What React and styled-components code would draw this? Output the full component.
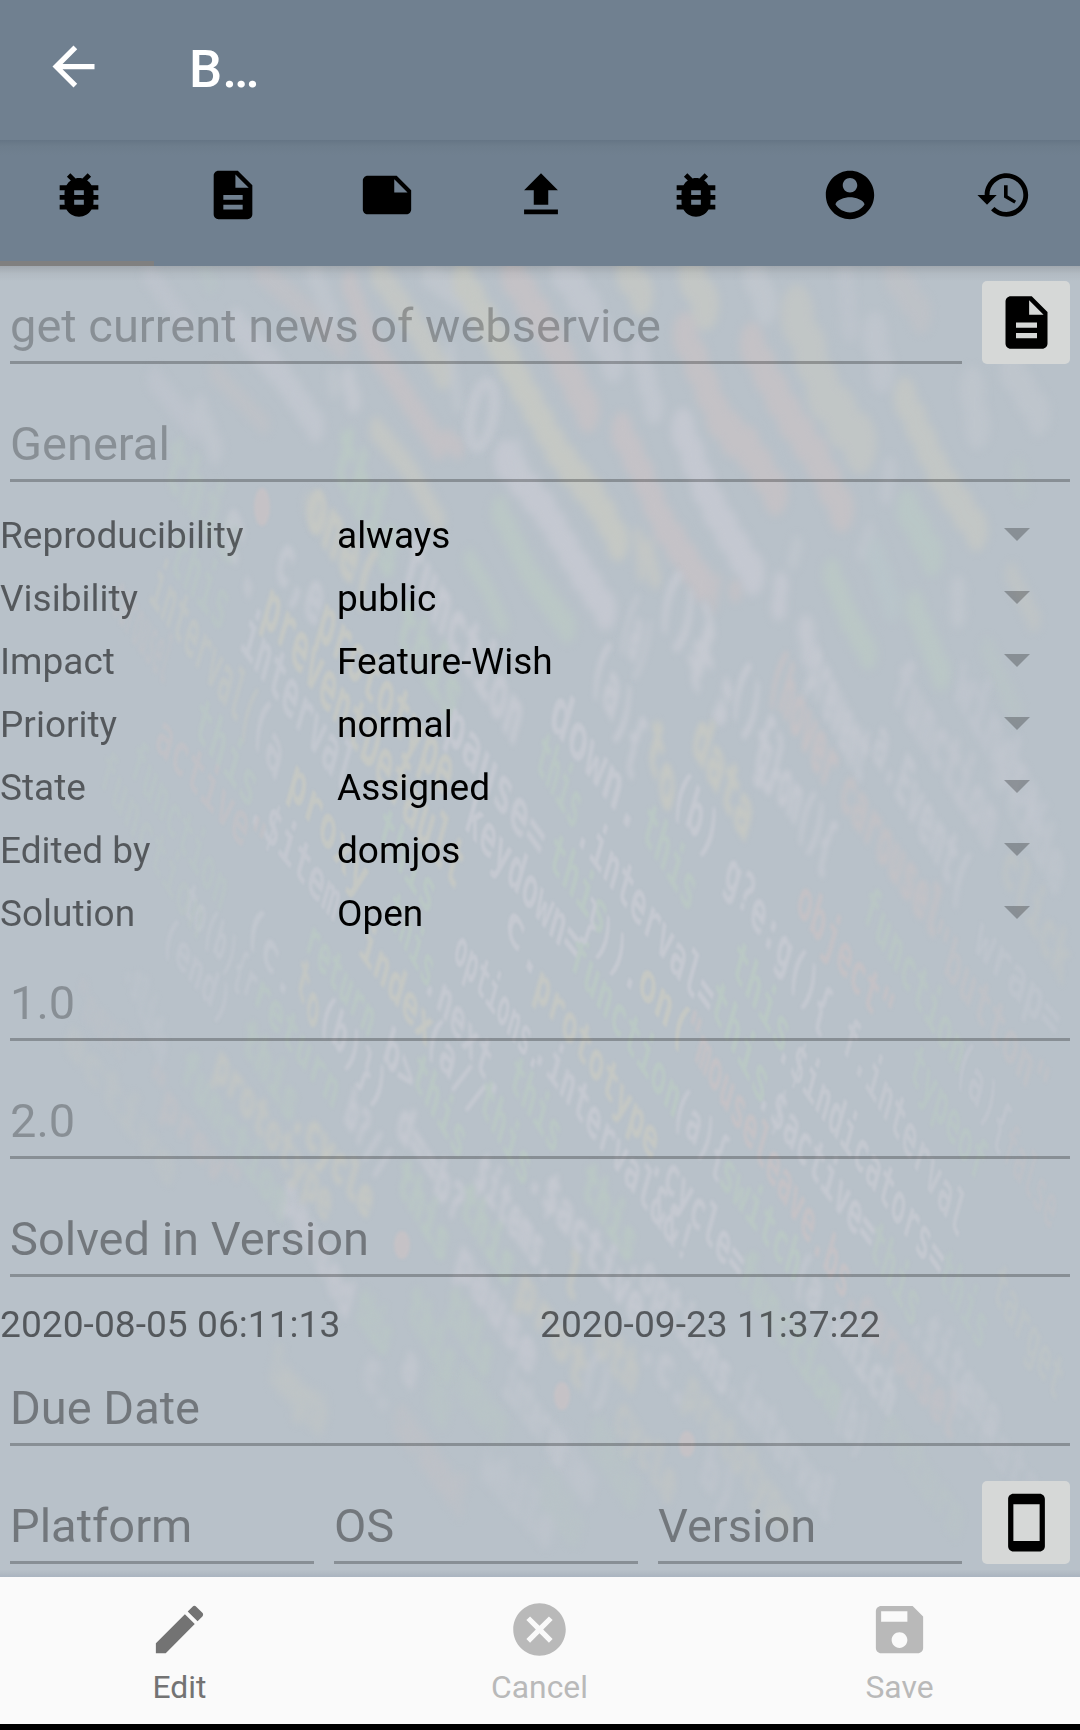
import React from "react";
import styled, { createGlobalStyle } from "styled-components";

const GlobalStyle = createGlobalStyle`
  * { box-sizing: border-box; }
  html, body { margin: 0; padding: 0; }
  body { font-family: Roboto, "Noto Sans", sans-serif; background: #000; }
`;

const Screen = styled.div`
  width: 1080px;
  height: 1730px;
  display: flex;
  flex-direction: column;
  overflow: hidden;
  background: #000;
`;

const AppBar = styled.header`
  height: 140px;
  flex: none;
  display: flex;
  align-items: center;
  padding: 0 42px 7px;
  background: #708090;
  color: #fff;
`;

const Title = styled.h1`
  margin: 0 0 0 84px;
  font-size: 52.5px;
  font-weight: 500;
  line-height: 62px;
  padding-top: 5px;
`;

const TabBar = styled.nav`
  height: 126px;
  flex: none;
  display: grid;
  grid-template-columns: repeat(7, 1fr);
  background: linear-gradient(#657585 0, #6d7d8c 6px, #708090 15px);
`;

const Tab = styled.div`
  display: flex;
  justify-content: center;
  padding: 26px 0 0 3px;
  border-bottom: 5px solid ${(p) => (p.$active ? "#808080" : "transparent")};
`;

const Icon = styled.svg`
  width: ${(p) => p.$size}px;
  height: ${(p) => p.$size}px;
  fill: currentColor;
  flex: none;
  display: block;
`;

const Page = styled.main`
  height: 1311px;
  flex: none;
  display: grid;
  background: #b8c1c9;
  overflow: hidden;
`;

const Backdrop = styled.svg`
  grid-area: 1 / 1;
  width: 1080px;
  height: 1311px;
  font-family: "DejaVu Sans Mono", monospace;
  font-weight: 700;
  user-select: none;
`;

const Form = styled.div`
  grid-area: 1 / 1;
  z-index: 1;
  display: flex;
  flex-direction: column;
  background:
    linear-gradient(rgba(70, 70, 70, 0.2), rgba(70, 70, 70, 0.06) 7px, rgba(70, 70, 70, 0) 15px) top / 100% 15px no-repeat,
    linear-gradient(rgba(80, 100, 130, 0), rgba(80, 100, 130, 0.14)) bottom / 100% 7px no-repeat;
`;

const FieldRow = styled.div`
  display: flex;
  height: ${(p) => p.$height || 118}px;
  flex: none;
  align-items: flex-end;
  padding: 0 10px 10px;
  gap: 20px;
`;

const Field = styled.div`
  flex: 1 1 0;
  min-width: 0;
  padding-bottom: 7px;
  border-bottom: 3px solid rgba(0, 0, 0, 0.26);
  font-size: 47px;
  line-height: 56px;
  white-space: nowrap;
  color: rgba(0, 0, 0, ${(p) => (p.$hint ? 0.38 : 0.26)});
`;

const IconButton = styled.button`
  width: 88px;
  height: 83px;
  flex: none;
  display: flex;
  align-items: center;
  justify-content: center;
  padding: 0;
  border: 0;
  border-radius: 5px;
  background: #d6d8d7;
  color: #000;
`;

const Selects = styled.div`
  padding-top: 11px;
  flex: none;
`;

const SelectRow = styled.div`
  height: 63px;
  display: grid;
  grid-template-columns: 337px 1fr 26px;
  align-items: center;
  padding-right: 50px;
  font-size: 37px;
  line-height: 44px;
`;

const Label = styled.span`
  color: rgba(0, 0, 0, 0.54);
  padding-top: 2px;
`;

const Value = styled.span`
  color: #000;
  padding-top: 2px;
`;

const Caret = styled.span`
  width: 26px;
  height: 13px;
  background: rgba(0, 0, 0, 0.26);
  clip-path: polygon(0 0, 100% 0, 50% 100%);
`;

const Dates = styled.div`
  height: 51px;
  flex: none;
  display: grid;
  grid-template-columns: 1fr 1fr;
  padding-top: 15px;
  font-size: 37.2px;
  line-height: 44px;
  color: rgba(0, 0, 0, 0.54);
`;

const BottomBar = styled.footer`
  height: 147px;
  flex: none;
  display: grid;
  grid-template-columns: repeat(3, 1fr);
  background: #fafafa;
`;

const Action = styled.div`
  display: flex;
  flex-direction: column;
  align-items: center;
  padding: 21px 1px 0 0;
  font-size: 31.8px;
  line-height: 38px;
  gap: 7px;
  color: ${(p) => (p.$disabled ? "#b9b9b9" : "#737373")};
`;

const paths = {
  back: "M20 11H7.83l5.59-5.59L12 4l-8 8 8 8 1.41-1.41L7.83 13H20v-2z",
  bug: "M20 8h-2.81c-.45-.78-1.07-1.45-1.82-1.96L17 4.41 15.59 3l-2.17 2.17C12.96 5.06 12.49 5 12 5c-.49 0-.96.06-1.41.17L8.41 3 7 4.41l1.62 1.63C7.88 6.55 7.26 7.22 6.81 8H4v2h2.09c-.05.33-.09.66-.09 1v1H4v2h2v1c0 .34.04.67.09 1H4v2h2.81c1.04 1.79 2.97 3 5.19 3s4.15-1.21 5.19-3H20v-2h-2.09c.05-.33.09-.66.09-1v-1h2v-2h-2v-1c0-.34-.04-.67-.09-1H20V8zm-6 8h-4v-2h4v2zm0-4h-4v-2h4v2z",
  doc: "M14 2H6c-1.1 0-1.99.9-1.99 2L4 20c0 1.1.89 2 1.99 2H18c1.1 0 2-.9 2-2V8l-6-6zm2 16H8v-2h8v2zm0-4H8v-2h8v2zm-3-5V3.5L18.5 9H13z",
  note: "M22 10l-6-6H4c-1.1 0-2 .9-2 2v12.01c0 1.1.9 1.99 2 1.99l16-.01c1.1 0 2-.89 2-1.99v-8zm-7-4.5l5.5 5.5H15V5.5z",
  upload: "M9 16h6v-6h4l-7-7-7 7h4zm-4 2h14v2H5z",
  account: "M12 2C6.48 2 2 6.48 2 12s4.48 10 10 10 10-4.48 10-10S17.52 2 12 2zm0 3c1.66 0 3 1.34 3 3s-1.34 3-3 3-3-1.34-3-3 1.34-3 3-3zm0 14.2c-2.5 0-4.71-1.28-6-3.22.03-1.99 4-3.08 6-3.08 1.99 0 5.97 1.09 6 3.08-1.29 1.94-3.5 3.22-6 3.22z",
  history: "M13 3c-4.97 0-9 4.03-9 9H1l3.89 3.89.07.14L9 12H6c0-3.87 3.13-7 7-7s7 3.13 7 7-3.13 7-7 7c-1.93 0-3.68-.79-4.94-2.06l-1.42 1.42C8.27 19.99 10.51 21 13 21c4.97 0 9-4.03 9-9s-4.03-9-9-9zm-1 5v5l4.28 2.54.72-1.21-3.5-2.08V8H12z",
  phone: "M17 1.01L7 1c-1.1 0-2 .9-2 2v18c0 1.1.9 2 2 2h10c1.1 0 2-.9 2-2V3c0-1.1-.9-1.99-2-1.99zM17 19H7V5h10v14z",
  edit: "M3 17.25V21h3.75L17.81 9.94l-3.75-3.75L3 17.25zM20.71 7.04c.39-.39.39-1.02 0-1.41l-2.34-2.34c-.39-.39-1.02-.39-1.41 0l-1.83 1.83 3.75 3.75 1.83-1.83z",
  cancel: "M12 2C6.47 2 2 6.47 2 12s4.47 10 10 10 10-4.47 10-10S17.53 2 12 2zm5 13.59L15.59 17 12 13.41 8.41 17 7 15.59 10.59 12 7 8.41 8.41 7 12 10.59 15.59 7 17 8.41 13.41 12 17 15.59z",
  save: "M17 3H5c-1.11 0-2 .9-2 2v14c0 1.1.89 2 2 2h14c1.1 0 2-.9 2-2V7l-4-4zm-5 16c-1.66 0-3-1.34-3-3s1.34-3 3-3 3 1.34 3 3-1.34 3-3 3zm3-10H5V5h10v4z",
};

function Glyph({ name, size }) {
  return (
    <Icon viewBox="0 0 24 24" $size={size} aria-hidden="true">
      <path d={paths[name]} />
    </Icon>
  );
}

const inks = { w: "#c5c9d1", g: "#bac8c5", y: "#c5c8c4", p: "#c5c2c6", b: "#b9c6ca" };

/* Out-of-focus streaks of the wallpaper: points, ink, width, strength. */
const streaks = [
  ["262,272 300,305 345,350", "p", 16, 0.5],
  ["237,325 285,380 325,440", "w", 20, 0.7],
  ["150,275 190,330", "w", 16, 0.4],
  ["205,270 214,290", "g", 12, 0.4],
  ["155,380 200,435", "w", 16, 0.4],
  ["215,372 265,425", "p", 13, 0.4],
  ["200,410 220,462", "w", 18, 0.5],
  ["315,275 335,325", "w", 18, 0.5],
  ["348,380 358,415", "w", 16, 0.8],
  ["332,375 334,392", "w", 10, 0.6],
  ["350,285 372,345 405,395 438,445", "p", 18, 0.8],
  ["448,440 465,454", "p", 14, 0.8],
  ["380,275 415,325 447,380", "y", 20, 0.8],
  ["430,275 465,300", "w", 18, 0.6],
  ["463,280 505,355 560,455 600,505 625,555", "y", 24, 0.95],
  ["450,350 458,405", "w", 10, 0.6],
  ["513,275 550,335 590,415", "p", 26, 0.85],
  ["622,432 645,480 662,522 705,588", "p", 24, 0.9],
  ["563,270 590,310 615,365", "w", 26, 0.7],
  ["505,460 545,510 580,570 615,625", "w", 24, 0.9],
  ["516,450 522,470", "w", 14, 0.7],
  ["377,430 410,470 438,520", "y", 16, 0.8],
  ["312,505 322,525", "y", 16, 0.7],
  ["500,512 530,575 573,635", "g", 19, 0.9],
  ["470,560 488,590 505,630", "g", 13, 0.9],
  ["628,272 648,305", "y", 26, 0.8],
  ["640,355 655,410", "w", 22, 0.7],
  ["692,275 712,320", "y", 30, 0.8],
  ["755,275 770,315", "w", 26, 0.6],
  ["685,335 722,425 750,450 783,505", "p", 27, 0.85],
  ["752,345 785,410 818,460 842,510", "p", 27, 0.85],
  ["797,315 825,395 865,450", "y", 36, 0.7],
  ["905,398 940,475 982,538", "y", 25, 0.75],
  ["845,275 850,325", "w", 20, 0.35],
  ["895,275 925,320", "p", 24, 0.4],
  ["875,335 885,385", "w", 28, 0.5],
  ["972,390 978,430", "w", 28, 0.45],
  ["1012,370 1045,425", "w", 26, 0.45],
  ["683,430 707,495 735,545 762,588", "w", 26, 0.9],
  ["717,580 711,612", "p", 9, 0.8],
  ["735,590 737,606", "p", 13, 0.8],
  ["890,470 885,500", "w", 16, 0.5],
  ["870,530 858,560", "w", 10, 0.5],
  ["797,545 792,565", "w", 11, 0.6],
  ["832,575 850,620 872,660", "g", 20, 0.9],
  ["908,510 932,555", "g", 25, 0.75],
  ["915,608 948,690", "g", 21, 0.8],
  ["875,555 892,605", "b", 22, 0.7],
  ["781,585 778,615", "w", 16, 0.9],
  ["806,630 810,655", "w", 18, 0.85],
  ["958,590 958,620", "w", 17, 0.6],
  ["1012,575 1040,632", "y", 15, 0.5],
  ["988,650 1015,710", "g", 15, 0.45],
  ["1018,470 1024,500", "g", 14, 0.45],
  ["648,548 658,590", "y", 12, 0.85],
  ["638,535 642,575", "y", 9, 0.85],
];

/* Code fragments of the wallpaper: text, ink, centre of the first glyph, centre of the last glyph. */
const fragments = [
  ["(){", "w", 669, 601, 700, 655],
  ["};", "w", 704, 650, 725, 700],
  ["(a)", "w", 628, 625, 643, 655],
  ["prevent", "w", 815, 670, 861, 760],
  ["a.Event(", "w", 881, 748, 960, 880],
  ["function", "w", 902, 690, 988, 826],
  ["window", "w", 965, 690, 1035, 810],
  ["slide", "w", 1000, 770, 1055, 870],
  ["click", "y", 1010, 870, 1060, 960],
  ["(hover", "p", 777, 680, 829, 769],
  ["carousel", "p", 848, 795, 933, 916],
  ["data", "y", 702, 744, 743, 816],
  ["to", "y", 655, 751, 667, 787],
  ["(b)", "w", 681, 798, 709, 837],
  ["this", "g", 650, 830, 688, 891],
  ["this", "g", 543, 759, 574, 809],
  ["this", "g", 557, 859, 599, 916],
  ["down.", "w", 561, 719, 630, 810],
  ["(a){", "w", 600, 670, 635, 745],
  ["(){}", "w", 740, 690, 775, 770],
  ["g.on(){", "w", 764, 759, 826, 848],
  [".interval=", "w", 585, 834, 705, 997],
  ["this", "g", 719, 1007, 760, 1083],
  [".$active=", "w", 766, 1097, 867, 1233],
  ["this", "g", 877, 1247, 912, 1307],
  [".$items", "w", 919, 1323, 991, 1420],
  ["this", "g", 344, 462, 389, 551],
  ["this", "g", 406, 630, 451, 698],
  ["one(", "y", 317, 512, 365, 580],
  ["this", "g", 175, 470, 230, 540],
  ["this", "g", 179, 559, 220, 609],
  ["interval(", "y", 158, 591, 248, 716],
  ["(a", "w", 261, 725, 274, 755],
  ["this", "g", 203, 726, 248, 787],
  [".$item", "w", 258, 812, 331, 901],
  ["preventDefault", "y", 272, 612, 454, 866],
  ["interval", "w", 250, 641, 344, 773],
  ["c.", "w", 234, 534, 251, 576],
  ["c,e", "w", 285, 565, 314, 602],
  ["function", "w", 413, 566, 513, 719],
  ["active\"", "p", 165, 741, 255, 844],
  ["function", "g", 138, 766, 220, 891],
  ["function", "g", 107, 776, 196, 919],
  ["carousel", "p", 118, 600, 165, 665],
  ["prototype", "y", 327, 626, 444, 773],
  ["proxy", "y", 298, 787, 358, 876],
  ["this", "g", 386, 834, 427, 894],
  ["pause=", "w", 456, 730, 535, 838],
  ["keydown=", "w", 474, 822, 572, 944],
  ["function", "g", 578, 960, 672, 1098],
  ["(a){", "w", 681, 1112, 719, 1157],
  ["switch", "g", 728, 1177, 793, 1263],
  ["(a.which", "w", 802, 1277, 888, 1397],
  ["})).", "w", 590, 925, 632, 975],
  ["on(", "y", 648, 987, 680, 1028],
  ["\"mouseleave.bs", "p", 692, 1037, 843, 1280],
  [".carousel", "p", 853, 1297, 950, 1420],
  ["object\"", "p", 805, 905, 884, 1013],
  ["g?e:g(){", "w", 733, 878, 822, 1010],
  ["f.interval", "w", 850, 1043, 957, 1217],
  ["function", "g", 871, 912, 957, 1053],
  ["(a){", "w", 964, 1067, 1001, 1127],
  ["\"button\"", "p", 939, 947, 1039, 1087],
  ["this", "g", 740, 967, 781, 1033],
  [".$indicators=", "w", 786, 1050, 936, 1260],
  ["this", "g", 946, 1275, 980, 1330],
  ["typeof", "g", 917, 1070, 977, 1163],
  ["wrap=", "w", 985, 945, 1050, 1020],
  ["c.", "w", 515, 930, 532, 958],
  ["prototype", "y", 543, 990, 650, 1140],
  [".cycle=", "w", 659, 1163, 736, 1263],
  ["function", "g", 747, 1275, 833, 1400],
  ["(b)", "w", 842, 1412, 860, 1438],
  [".interval&&!", "w", 542, 1052, 684, 1245],
  ["this", "g", 590, 1187, 628, 1243],
  [".options", "w", 636, 1263, 723, 1377],
  [".$active", "w", 537, 1180, 635, 1307],
  ["(end)", "w", 170, 940, 222, 1006],
  ["to(b){r", "w", 190, 905, 250, 985],
  ["(c.", "w", 255, 930, 285, 980],
  ["return", "g", 313, 943, 368, 1020],
  ["return", "g", 262, 997, 331, 1090],
  ["this", "g", 250, 1043, 289, 1103],
  ["index", "y", 368, 950, 424, 1027],
  ["(a//", "w", 434, 1040, 475, 1100],
  [".next.", "w", 432, 983, 496, 1080],
  ["options.", "w", 461, 953, 535, 1055],
  ["this", "g", 395, 915, 427, 970],
  ["this", "g", 517, 1080, 553, 1135],
  ["to", "y", 303, 983, 313, 1010],
  ["(b)})", "w", 327, 1018, 378, 1090],
  ["b>", "w", 392, 1055, 406, 1076],
  ["prototype", "y", 222, 1070, 324, 1203],
  ["function", "g", 189, 1073, 279, 1203],
  [".cycle", "y", 300, 1120, 365, 1200],
  ["b?//", "w", 352, 1115, 382, 1165],
  ["d==b?", "w", 405, 1128, 455, 1205],
  ["this", "g", 420, 1077, 458, 1140],
  ["this", "g", 487, 1103, 523, 1167],
  ["this", "g", 405, 1183, 441, 1243],
  ["this", "g", 468, 1207, 506, 1267],
  ["$items.", "w", 482, 1177, 547, 1265],
  [".slide", "w", 130, 970, 162, 1050],
  ["\"next\"", "p", 80, 1000, 130, 1055],
  ["active", "y", 75, 1045, 165, 1165],
  ["\"prev\"", "p", 155, 1090, 230, 1185],
  ["paused", "w", 290, 1200, 345, 1300],
  ["pause", "w", 465, 1267, 527, 1353],
  ["this", "g", 362, 1310, 385, 1340],
  ["this", "g", 415, 1310, 448, 1365],
  ["this", "g", 453, 1310, 485, 1360],
  ["this", "g", 432, 1390, 445, 1415],
  ["return", "g", 460, 1380, 500, 1430],
  ["length", "y", 275, 1370, 320, 1420],
  ["c.", "w", 372, 1375, 385, 1395],
  ["a", "w", 410, 1370, 410, 1370],
  ["interva", "w", 510, 1385, 560, 1450],
  ["prot", "y", 527, 1295, 577, 1368],
  ["l", "y", 572, 1280, 572, 1280],
  ["oth", "y", 603, 1345, 630, 1375],
  ["()", "w", 590, 1375, 602, 1393],
  [".c.", "w", 650, 1350, 680, 1390],
  ["cycle", "y", 622, 1420, 668, 1485],
  ["prototype", "y", 692, 1395, 785, 1520],
  [".interval", "w", 735, 1385, 826, 1503],
  ["this", "g", 597, 1440, 632, 1493],
  ["b)", "w", 710, 1475, 725, 1495],
  ["$items", "w", 555, 1445, 590, 1490],
  ["carousel", "p", 400, 1420, 460, 1500],
  ["while", "w", 490, 1470, 545, 1530],
  ["this", "g", 545, 1490, 575, 1530],
  ["return", "g", 890, 1430, 955, 1520],
  ["e.data", "w", 960, 1400, 1030, 1490],
  ["target", "y", 1000, 1290, 1055, 1380],
  ["false", "p", 1010, 1150, 1050, 1210],
];

const PAGE_TOP = 266;
const EM = 40;
const ADVANCE = 0.602 * EM;
const STRETCH = 1.9;

function placeStreak([points, ink, width, strength]) {
  return {
    points: points
      .split(" ")
      .map((pair) => {
        const [x, y] = pair.split(",").map(Number);
        return `${x},${((y - PAGE_TOP) / STRETCH).toFixed(1)}`;
      })
      .join(" "),
    stroke: inks[ink],
    strokeWidth: width * 0.9,
    strokeDasharray: `1 ${(width * 0.62).toFixed(1)}`,
    opacity: strength,
  };
}

function placeFragment([text, ink, x1, y1, x2, y2]) {
  const spans = text.length - 1;
  const a = spans ? (x2 - x1) / (spans * ADVANCE) : 0.52;
  const b = spans ? (y2 - y1) / (spans * ADVANCE) : 0.8;
  const rise = 42 + (x1 / 1080) * 10 + (Math.max(0, 900 - y1) / 600) * 32;
  const c = (-0.28 * rise) / EM;
  const d = rise / EM;
  const ox = -ADVANCE / 2;
  const oy = 0.27 * EM;
  const x = x1 + a * ox + c * oy;
  const y = y1 - PAGE_TOP + b * ox + d * oy;
  const mx = (x1 + x2) / 2;
  const my = (y1 + y2) / 2;
  const depth = my - (700 + 0.45 * mx);
  const blur = 0.9 + Math.abs(depth) / (depth < 0 ? 130 : 135);
  const fade =
    Math.min(1, Math.max(0.15, (mx - 20) / 320)) *
    Math.min(1, Math.max(0.3, (1180 - mx) / 340)) *
    Math.min(1, Math.max(0.35, (1700 - my) / 420));
  return {
    text,
    fill: inks[ink],
    transform: `matrix(${[a, b, c, d, x, y].map((n) => n.toFixed(3)).join(" ")})`,
    blur: Math.min(5, Math.round(blur)),
    opacity: fade.toFixed(2),
  };
}

const smears = streaks.map(placeStreak);
const placed = fragments.map(placeFragment);

function Wallpaper() {
  return (
    <Backdrop viewBox="0 0 1080 1311" aria-hidden="true">
      <defs>
        {[1, 2, 3, 4, 5].map((n) => (
          <filter
            key={n}
            id={`soft${n}`}
            x="0"
            y="0"
            width="1080"
            height="1311"
            filterUnits="userSpaceOnUse"
            colorInterpolationFilters="sRGB"
          >
            <feGaussianBlur stdDeviation={n === 1 ? 0.9 : n * 0.85} />
          </filter>
        ))}
      </defs>
      <g filter="url(#soft5)">
        <g fill="none" strokeLinecap="round" strokeLinejoin="round" transform={`scale(1 ${STRETCH})`}>
          {smears.map((smear, i) => (
            <polyline key={i} {...smear} />
          ))}
        </g>
      </g>
      <ellipse
        cx="482"
        cy="149"
        rx="11"
        ry="33"
        transform="rotate(10 482 149)"
        fill="none"
        stroke={inks.w}
        strokeWidth="11"
        opacity="0.75"
        filter="url(#soft4)"
      />
      {[5, 4, 3, 2, 1].map((n) => (
        <g key={n} filter={`url(#soft${n})`} strokeWidth={n > 2 ? n * 0.5 : 0}>
          {placed
            .filter((f) => f.blur === n)
            .map((f, i) => (
              <text key={i} fontSize={EM} fill={f.fill} stroke={f.fill} opacity={f.opacity} transform={f.transform}>
                {f.text}
              </text>
            ))}
        </g>
      ))}
      <g fill={inks.p} filter="url(#soft2)">
        <ellipse cx="262" cy="241" rx="8" ry="19" />
        <ellipse cx="402" cy="979" rx="8" ry="14" />
        <ellipse cx="562" cy="1130" rx="8" ry="14" />
        <ellipse cx="687" cy="1178" rx="8" ry="13" />
      </g>
    </Backdrop>
  );
}

const tabs = ["bug", "doc", "note", "upload", "bug", "account", "history"];

const selects = [
  ["Reproducibility", "always"],
  ["Visibility", "public"],
  ["Impact", "Feature-Wish"],
  ["Priority", "normal"],
  ["State", "Assigned"],
  ["Edited by", "domjos"],
  ["Solution", "Open"],
];

export default function App() {
  return (
    <>
      <GlobalStyle />
      <Screen>
        <AppBar>
          <Glyph name="back" size={63} />
          <Title>B…</Title>
        </AppBar>
        <TabBar>
          {tabs.map((name, i) => (
            <Tab key={i} $active={i === 0}>
              <Glyph name={name} size={58} />
            </Tab>
          ))}
        </TabBar>
        <Page>
          <Wallpaper />
          <Form>
            <FieldRow $height={108}>
              <Field>get current news of webservice</Field>
              <IconButton aria-label="Description">
                <Glyph name="doc" size={63} />
              </IconButton>
            </FieldRow>
            <FieldRow>
              <Field>General</Field>
            </FieldRow>
            <Selects>
              {selects.map(([label, value]) => (
                <SelectRow key={label}>
                  <Label>{label}</Label>
                  <Value>{value}</Value>
                  <Caret />
                </SelectRow>
              ))}
            </Selects>
            <FieldRow $height={107}>
              <Field>1.0</Field>
            </FieldRow>
            <FieldRow>
              <Field>2.0</Field>
            </FieldRow>
            <FieldRow>
              <Field $hint>Solved in Version</Field>
            </FieldRow>
            <Dates>
              <span>2020-08-05 06:11:13</span>
              <span>2020-09-23 11:37:22</span>
            </Dates>
            <FieldRow>
              <Field $hint>Due Date</Field>
            </FieldRow>
            <FieldRow>
              <Field $hint>Platform</Field>
              <Field $hint>OS</Field>
              <Field $hint>Version</Field>
              <IconButton aria-label="Device">
                <Glyph name="phone" size={63} />
              </IconButton>
            </FieldRow>
          </Form>
        </Page>
        <BottomBar>
          <Action>
            <Glyph name="edit" size={63} />
            <span>Edit</span>
          </Action>
          <Action $disabled>
            <Glyph name="cancel" size={63} />
            <span>Cancel</span>
          </Action>
          <Action $disabled>
            <Glyph name="save" size={63} />
            <span>Save</span>
          </Action>
        </BottomBar>
      </Screen>
    </>
  );
}
